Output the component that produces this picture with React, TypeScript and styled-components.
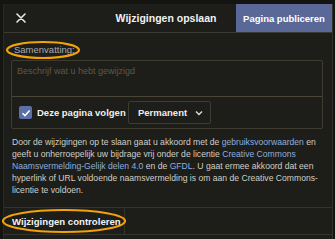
import React from "react";
import styled, { createGlobalStyle } from "styled-components";

const Global = createGlobalStyle`
  html, body { margin: 0; padding: 0; background: #141410; }
  body { font-family: "Liberation Sans", Arial, sans-serif; }
  * { box-sizing: border-box; }
`;

const Page = styled.div`
  position: relative;
  width: 335px;
  height: 239px;
  overflow: hidden;
  background: #141410;
  padding: 4px 2px 0 3px;
`;

const Dialog = styled.div`
  height: 100%;
  background: #1d1d19;
  border-left: 1px solid #2a2a24;
  border-right: 1px solid #33332c;
  display: flex;
  flex-direction: column;
`;

const Header = styled.div`
  display: flex;
  align-items: stretch;
  height: 29px;
  border-bottom: 1px solid #3a3a32;
`;

const CloseButton = styled.div`
  width: 28px;
  display: flex;
  align-items: center;
  justify-content: center;
  padding-left: 6px;
`;

const Title = styled.div`
  flex: 1;
  display: flex;
  align-items: center;
  justify-content: center;
  color: #f2f2f2;
  font-weight: bold;
  font-size: 10.5px;
  padding-left: 64px;
`;

const PublishButton = styled.div`
  width: 96px;
  background: #5a6898;
  color: #ffffff;
  font-weight: bold;
  font-size: 9.5px;
  display: flex;
  align-items: center;
  justify-content: center;
`;

const Body = styled.div`
  padding: 11px 9px 0 7px;
  flex: 1;
`;

const Label = styled.div`
  color: #a9abb8;
  font-size: 9.5px;
  padding-left: 3px;
  line-height: 12px;
`;

const Box = styled.div`
  margin-top: 4px;
  border: 1px solid #3f3b2e;
  border-radius: 2px;
`;

const SummaryArea = styled.div`
  height: 36px;
  border-bottom: 1px solid #4a4535;
  padding: 5px 5px;
  color: #5f5a48;
  font-size: 9px;
`;

const OptionsRow = styled.div`
  height: 31px;
  display: flex;
  align-items: center;
  padding-left: 7px;
`;

const Check = styled.div`
  width: 13px;
  height: 13px;
  border-radius: 2px;
  background: #5b6fa8;
  display: flex;
  align-items: center;
  justify-content: center;
`;

const CheckLabel = styled.div`
  color: #f0f0f0;
  font-weight: bold;
  font-size: 9.5px;
  margin-left: 5px;
  width: 91px;
`;

const Select = styled.div`
  width: 83px;
  height: 23px;
  border: 1px solid #3d3b33;
  border-radius: 2px;
  display: flex;
  align-items: center;
  justify-content: space-between;
  padding: 0 7px 0 9px;
  color: #eeeeee;
  font-weight: bold;
  font-size: 9.5px;
`;

const Legal = styled.p`
  margin: 7px 0 0 0;
  padding-left: 1px;
  color: #cfcfc8;
  font-size: 8.6px;
  line-height: 12px;
`;

const Link = styled.span`
  color: #8eaede;
`;

const Footer = styled.div`
  height: 28px;
  margin-bottom: 4px;
  border-top: 1px solid #34342d;
  border-bottom: 1px solid #34342d;
  display: flex;
`;

const FooterCell = styled.div`
  width: 121px;
  border-right: 1px solid #34342d;
  display: flex;
  align-items: center;
  padding-left: 8px;
  color: #f2f2f2;
  font-weight: bold;
  font-size: 9.6px;
`;

const Annotation = styled.svg`
  position: absolute;
  left: 0;
  top: 0;
  pointer-events: none;
`;

export default function App() {
  return (
    <>
      <Global />
      <Page>
        <Dialog>
          <Header>
            <CloseButton>
              <svg width="10" height="10" viewBox="0 0 10 10">
                <path d="M1 1 L9 9 M9 1 L1 9" stroke="#e8e8e8" strokeWidth="1.6" strokeLinecap="round" />
              </svg>
            </CloseButton>
            <Title>Wijzigingen opslaan</Title>
            <PublishButton>Pagina publiceren</PublishButton>
          </Header>
          <Body>
            <Label>Samenvatting:</Label>
            <Box>
              <SummaryArea>Beschrijf wat u hebt gewijzigd</SummaryArea>
              <OptionsRow>
                <Check>
                  <svg width="10" height="10" viewBox="0 0 10 10">
                    <path d="M1.5 5.2 L4 7.6 L8.6 2.4" stroke="#ffffff" strokeWidth="1.5" fill="none" />
                  </svg>
                </Check>
                <CheckLabel>Deze pagina volgen</CheckLabel>
                <Select>
                  <span>Permanent</span>
                  <svg width="8" height="6" viewBox="0 0 8 6">
                    <path d="M1 1.5 L4 4.5 L7 1.5" stroke="#dddddd" strokeWidth="1.4" fill="none" />
                  </svg>
                </Select>
              </OptionsRow>
            </Box>
            <Legal>
              Door de wijzigingen op te slaan gaat u akkoord met de <Link>gebruiksvoorwaarden</Link> en
              geeft u onherroepelijk uw bijdrage vrij onder de licentie <Link>Creative Commons
              Naamsvermelding-Gelijk delen 4.0</Link> en de <Link>GFDL</Link>. U gaat ermee akkoord dat een
              hyperlink of URL voldoende naamsvermelding is om aan de Creative Commons-licentie te voldoen.
            </Legal>
          </Body>
          <Footer>
            <FooterCell>Wijzigingen controleren</FooterCell>
          </Footer>
        </Dialog>
        <Annotation width="335" height="239" viewBox="0 0 335 239">
          <ellipse cx="43" cy="50" rx="36" ry="8" fill="none" stroke="#f2a20c" strokeWidth="2.2" />
          <ellipse cx="64" cy="221" rx="61" ry="11" fill="none" stroke="#f2a20c" strokeWidth="2.2" />
        </Annotation>
      </Page>
    </>
  );
}
